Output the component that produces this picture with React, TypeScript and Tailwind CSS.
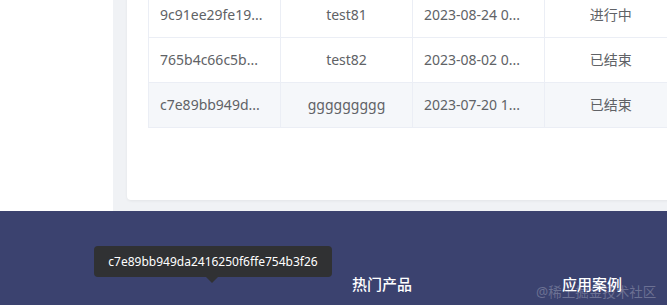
import React from 'react';

const rows = [
  { id: '9c91ee29fe19...', name: 'test81', time: '2023-08-24 0...', status: '进行中', hover: false },
  { id: '765b4c66c5b...', name: 'test82', time: '2023-08-02 0...', status: '已结束', hover: false },
  { id: 'c7e89bb949d...', name: 'ggggggggg', time: '2023-07-20 1...', status: '已结束', hover: true },
];

const font = { fontFamily: '"Noto Sans", "Noto Sans CJK SC", sans-serif' };

export default function App() {
  return (
    <div className="relative w-[667px] h-[305px] overflow-hidden bg-white" style={font}>
      {/* Main area */}
      <div className="flex h-[211px]">
        <aside className="w-[113px] shrink-0 bg-white" />
        <main className="flex-1 bg-[#f0f2f5] pl-[14px] pb-[11px] flex flex-col">
          <div className="flex-1 bg-white rounded-bl-[4px] shadow-[0_1px_3px_rgba(0,0,0,0.06)] pl-[21px] -mt-[8px]">
            <table className="table-fixed border-collapse text-[14px] text-[#606266] w-[528px]">
              <tbody>
                {rows.map((r) => (
                  <tr key={r.id} className={r.hover ? 'bg-[#f5f7fa]' : 'bg-white'}>
                    <td className="w-[132px] h-[45px] border border-[#ebeef5] border-t-0 pl-[11px] whitespace-nowrap">{r.id}</td>
                    <td className="w-[132px] h-[45px] border border-[#ebeef5] border-t-0 text-center whitespace-nowrap">{r.name}</td>
                    <td className="w-[132px] h-[45px] border border-[#ebeef5] border-t-0 pl-[11px] whitespace-nowrap">{r.time}</td>
                    <td className="w-[132px] h-[45px] border border-[#ebeef5] border-t-0 border-r-0 text-center whitespace-nowrap">{r.status}</td>
                  </tr>
                ))}
              </tbody>
            </table>
          </div>
        </main>
      </div>

      {/* Footer */}
      <footer className="h-[94px] bg-[#3b426f] relative">
        <div className="flex pt-[62px] pl-[352px] text-white text-[15px] font-medium leading-[22px]">
          <span className="w-[210px]">热门产品</span>
          <span>应用案例</span>
        </div>
        <span className="absolute left-[536px] top-[72px] text-[13.5px] text-white/25 leading-[18px] whitespace-nowrap">@稀土掘金技术社区</span>
      </footer>

      {/* Tooltip */}
      <div className="absolute left-[94px] top-[246px] w-[238px] h-[31px] bg-[#303133] rounded-[4px] text-white text-[12px] flex items-center justify-center">
        c7e89bb949da2416250f6ffe754b3f26
        <span className="absolute left-[112px] -bottom-[6px] w-0 h-0 border-l-[6px] border-r-[6px] border-t-[6px] border-l-transparent border-r-transparent border-t-[#303133]" />
      </div>
    </div>
  );
}
